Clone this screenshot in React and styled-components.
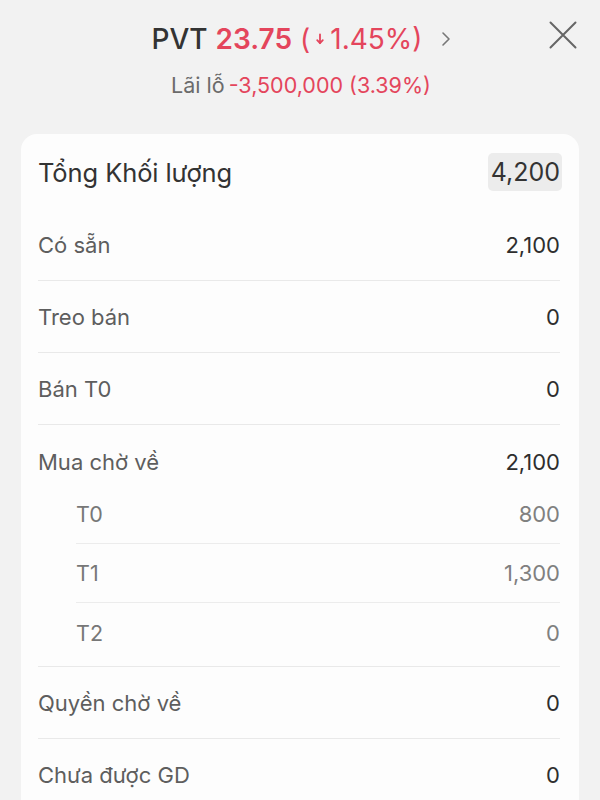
import React from "react";
import styled, { createGlobalStyle } from "styled-components";

const Global = createGlobalStyle`
  html, body { margin: 0; padding: 0; background: #f2f2f2; }
  body { font-family: Inter, "Noto Sans", "Liberation Sans", sans-serif; -webkit-font-smoothing: antialiased; }
  * { box-sizing: border-box; }
`;

const Page = styled.div`
  position: relative;
  min-height: 800px;
  background: #f2f2f2;
  padding-top: 21px;
  overflow: hidden;
`;

const Header = styled.header`
  display: flex;
  flex-direction: column;
  align-items: center;
`;

const TitleLine = styled.div`
  display: flex;
  align-items: center;
  gap: 8px;
  height: 36px;
  font-size: 28px;
  line-height: 36px;
  margin-left: 2px;
`;

const Ticker = styled.span`
  color: #333;
  font-weight: 500;
`;

const Price = styled.span`
  color: #e4455c;
  font-weight: 600;
`;

const Change = styled.span`
  display: flex;
  align-items: center;
  color: #e4455c;
  font-weight: 400;
  gap: 3px;
`;

const Chevron = styled.svg`
  margin-left: 10px;
  width: 10px;
  height: 16px;
`;

const SubLine = styled.div`
  margin-top: 14px;
  font-size: 21.5px;
  line-height: 28px;
  color: #6b6b6b;
  display: flex;
  gap: 4px;
  margin-left: 2px;
`;

const Loss = styled.span`
  color: #e4455c;
`;

const CloseBtn = styled.button`
  position: absolute;
  top: 20px;
  right: 22px;
  width: 30px;
  height: 30px;
  padding: 0;
  border: 0;
  background: transparent;
  display: flex;
  align-items: center;
  justify-content: center;
`;

const Card = styled.section`
  margin: 35px 21px 0;
  background: #fdfdfd;
  border-radius: 16px;
  padding: 19px 19px 0 17px;
  min-height: 700px;
`;

const TotalRow = styled.div`
  display: flex;
  align-items: center;
  justify-content: space-between;
  height: 38px;
  margin-bottom: 18px;
`;

const TotalLabel = styled.span`
  font-size: 25.5px;
  color: #333;
  font-weight: 400;
  letter-spacing: -0.1px;
`;

const Pill = styled.span`
  background: #ececec;
  border-radius: 5px;
  height: 38px;
  padding: 0 2px 0 3px;
  display: flex;
  align-items: center;
  font-size: 25px;
  color: #333;
  margin-right: -2px;
`;

const Row = styled.div`
  display: flex;
  align-items: center;
  justify-content: space-between;
  height: ${(p) => (p.$group ? "60px" : "72px")};
  padding-top: ${(p) => (p.$group ? "14px" : "0")};
  border-bottom: ${(p) => (p.$divider ? "1.5px solid #e9e9e9" : "none")};
`;

const Label = styled.span`
  font-size: 22px;
  color: #5e5e5e;
`;

const Value = styled.span`
  font-size: 22px;
  color: #2e2e2e;
  font-weight: 400;
`;

const Group = styled.div`
  border-bottom: 1.5px solid #e9e9e9;
`;

const SubList = styled.div`
  margin-left: 38px;
  padding-bottom: 4px;
`;

const SubRow = styled.div`
  display: flex;
  align-items: center;
  justify-content: space-between;
  height: 59px;
  border-bottom: ${(p) => (p.$divider ? "1.5px solid #ececec" : "none")};
`;

const SubLabel = styled.span`
  font-size: 21.5px;
  color: #777;
`;

const SubValue = styled.span`
  font-size: 22px;
  color: #808080;
`;

const rows = [
  { label: "Có sẵn", value: "2,100" },
  { label: "Treo bán", value: "0" },
  { label: "Bán T0", value: "0" },
];

const subRows = [
  { label: "T0", value: "800" },
  { label: "T1", value: "1,300" },
  { label: "T2", value: "0" },
];

export default function App() {
  return (
    <>
      <Global />
      <Page>
        <Header>
          <TitleLine>
            <Ticker>PVT</Ticker>
            <Price>23.75</Price>
            <Change>
              (
              <svg width="14" height="16" viewBox="0 0 14 16">
                <path d="M7 3.5v8.5" stroke="#e4455c" strokeWidth="1.8" fill="none" strokeLinecap="round" />
                <path d="M4.2 9.2L7 12.2l2.8-3" stroke="#e4455c" strokeWidth="1.8" fill="none" strokeLinecap="round" strokeLinejoin="round" />
              </svg>
              1.45%)
            </Change>
            <Chevron viewBox="0 0 10 16">
              <path d="M2 2l6 6-6 6" stroke="#777" strokeWidth="1.6" fill="none" strokeLinecap="round" strokeLinejoin="round" />
            </Chevron>
          </TitleLine>
          <SubLine>
            <span>Lãi lỗ</span>
            <Loss>-3,500,000 (3.39%)</Loss>
          </SubLine>
        </Header>
        <CloseBtn aria-label="Đóng">
          <svg width="28" height="28" viewBox="0 0 28 28">
            <path d="M1.5 1.5l25 25M26.5 1.5l-25 25" stroke="#666" strokeWidth="2" strokeLinecap="round" />
          </svg>
        </CloseBtn>
        <Card>
          <TotalRow>
            <TotalLabel>Tổng Khối lượng</TotalLabel>
            <Pill>4,200</Pill>
          </TotalRow>
          {rows.map((r) => (
            <Row key={r.label} $divider>
              <Label>{r.label}</Label>
              <Value>{r.value}</Value>
            </Row>
          ))}
          <Group>
            <Row $group>
              <Label>Mua chờ về</Label>
              <Value>2,100</Value>
            </Row>
            <SubList>
              {subRows.map((s, i) => (
                <SubRow key={s.label} $divider={i < subRows.length - 1}>
                  <SubLabel>{s.label}</SubLabel>
                  <SubValue>{s.value}</SubValue>
                </SubRow>
              ))}
            </SubList>
          </Group>
          <Row $divider>
            <Label>Quyền chờ về</Label>
            <Value>0</Value>
          </Row>
          <Row>
            <Label>Chưa được GD</Label>
            <Value>0</Value>
          </Row>
        </Card>
      </Page>
    </>
  );
}
